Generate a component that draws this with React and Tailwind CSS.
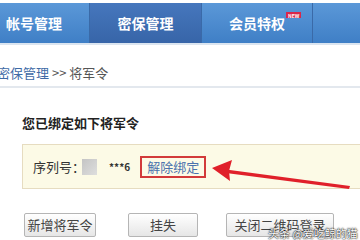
import React from 'react';

const font = { fontFamily: '"Noto Sans CJK SC", "Noto Sans", sans-serif' };

function Tab({ label, active, width, children }) {
  return (
    <div
      className={`relative flex items-center justify-center h-full text-[14px] font-bold text-white border-r border-[#3a6aa8] ${width} ${
        active ? 'bg-gradient-to-b from-[#4677bd] to-[#3765a8]' : ''
      }`}
    >
      {label}
      {children}
    </div>
  );
}

function Btn({ label, width }) {
  return (
    <div
      className={`flex items-center justify-center h-[24px] ${width} text-[13px] text-[#444] border border-[#b5b5b5] rounded-[2px] bg-gradient-to-b from-white to-[#e6e6e6]`}
    >
      {label}
    </div>
  );
}

export default function App() {
  return (
    <div className="relative w-[360px] h-[240px] overflow-hidden bg-white" style={font}>
      <div className="h-[3px] bg-white" />
      <div className="flex h-[40px] bg-gradient-to-b from-[#5b98d8] to-[#3f7fc6]">
        <div className="flex items-center h-full w-[90px] pl-[6px] text-[14px] font-bold text-white border-r border-[#3a6aa8]">
          帐号管理
        </div>
        <Tab label="密保管理" active width="w-[112px]" />
        <Tab label="会员特权" width="w-[111px]">
          <span className="absolute left-[84px] top-[9px] px-[2px] h-[6px] flex items-center bg-[#d9274a] text-[5px] leading-none text-white font-bold">
            NEW
          </span>
        </Tab>
      </div>
      <div className="h-[2px] bg-[#dbe5f0]" />

      <div className="mx-0 mt-[19px] pb-[4px] border-b-2 border-[#e3e8ee] text-[13px] leading-[18px] -ml-[3px]">
        <span className="text-[#3e6aa6]">密保管理</span>
        <span className="text-[#555]"> &gt;&gt; 将军令</span>
      </div>

      <div className="ml-[22px] mt-[26px] text-[13px] font-bold leading-[18px] text-[#222]">
        您已绑定如下将军令
      </div>

      <div className="ml-[22px] mt-[12px] h-[45px] w-[360px] flex items-center border border-[#e6dcc0] bg-[#fcfae6] pl-[10px]">
        <span className="text-[13px] text-[#333]">序列号：</span>
        <span className="-ml-[3px] w-[15px] h-[16px] bg-gradient-to-br from-[#c4c4c4] to-[#dedede]" />
        <span className="ml-[12px] text-[10px] font-bold text-[#333]">***6</span>
        <span className="ml-[10px] flex items-center h-[22px] px-[5px] border-2 border-[#d23a3a] text-[13px] text-[#4a72ad]">
          解除绑定
        </span>
      </div>

      <div className="flex ml-[24px] mt-[24px]">
        <Btn label="新增将军令" width="w-[72px]" />
        <div className="w-[32px]" />
        <Btn label="挂失" width="w-[70px]" />
        <div className="w-[28px]" />
        <Btn label="关闭二维码登录" width="w-[108px]" />
      </div>

      <svg className="absolute left-0 top-0" width="360" height="240" viewBox="0 0 360 240">
        <polygon points="226,169.5 350,186 349,189 226,173" fill="#e0202a" />
        <polygon points="212,168 232,160 229,171 230,181" fill="#e0202a" />
      </svg>

      <div
        className="absolute left-[268px] top-[228px] text-[11px] text-white leading-none"
        style={{ textShadow: '0 0 2px #000, 0 0 1px #000' }}
      >
        头条 @爱吃鲸的猫
      </div>
    </div>
  );
}
